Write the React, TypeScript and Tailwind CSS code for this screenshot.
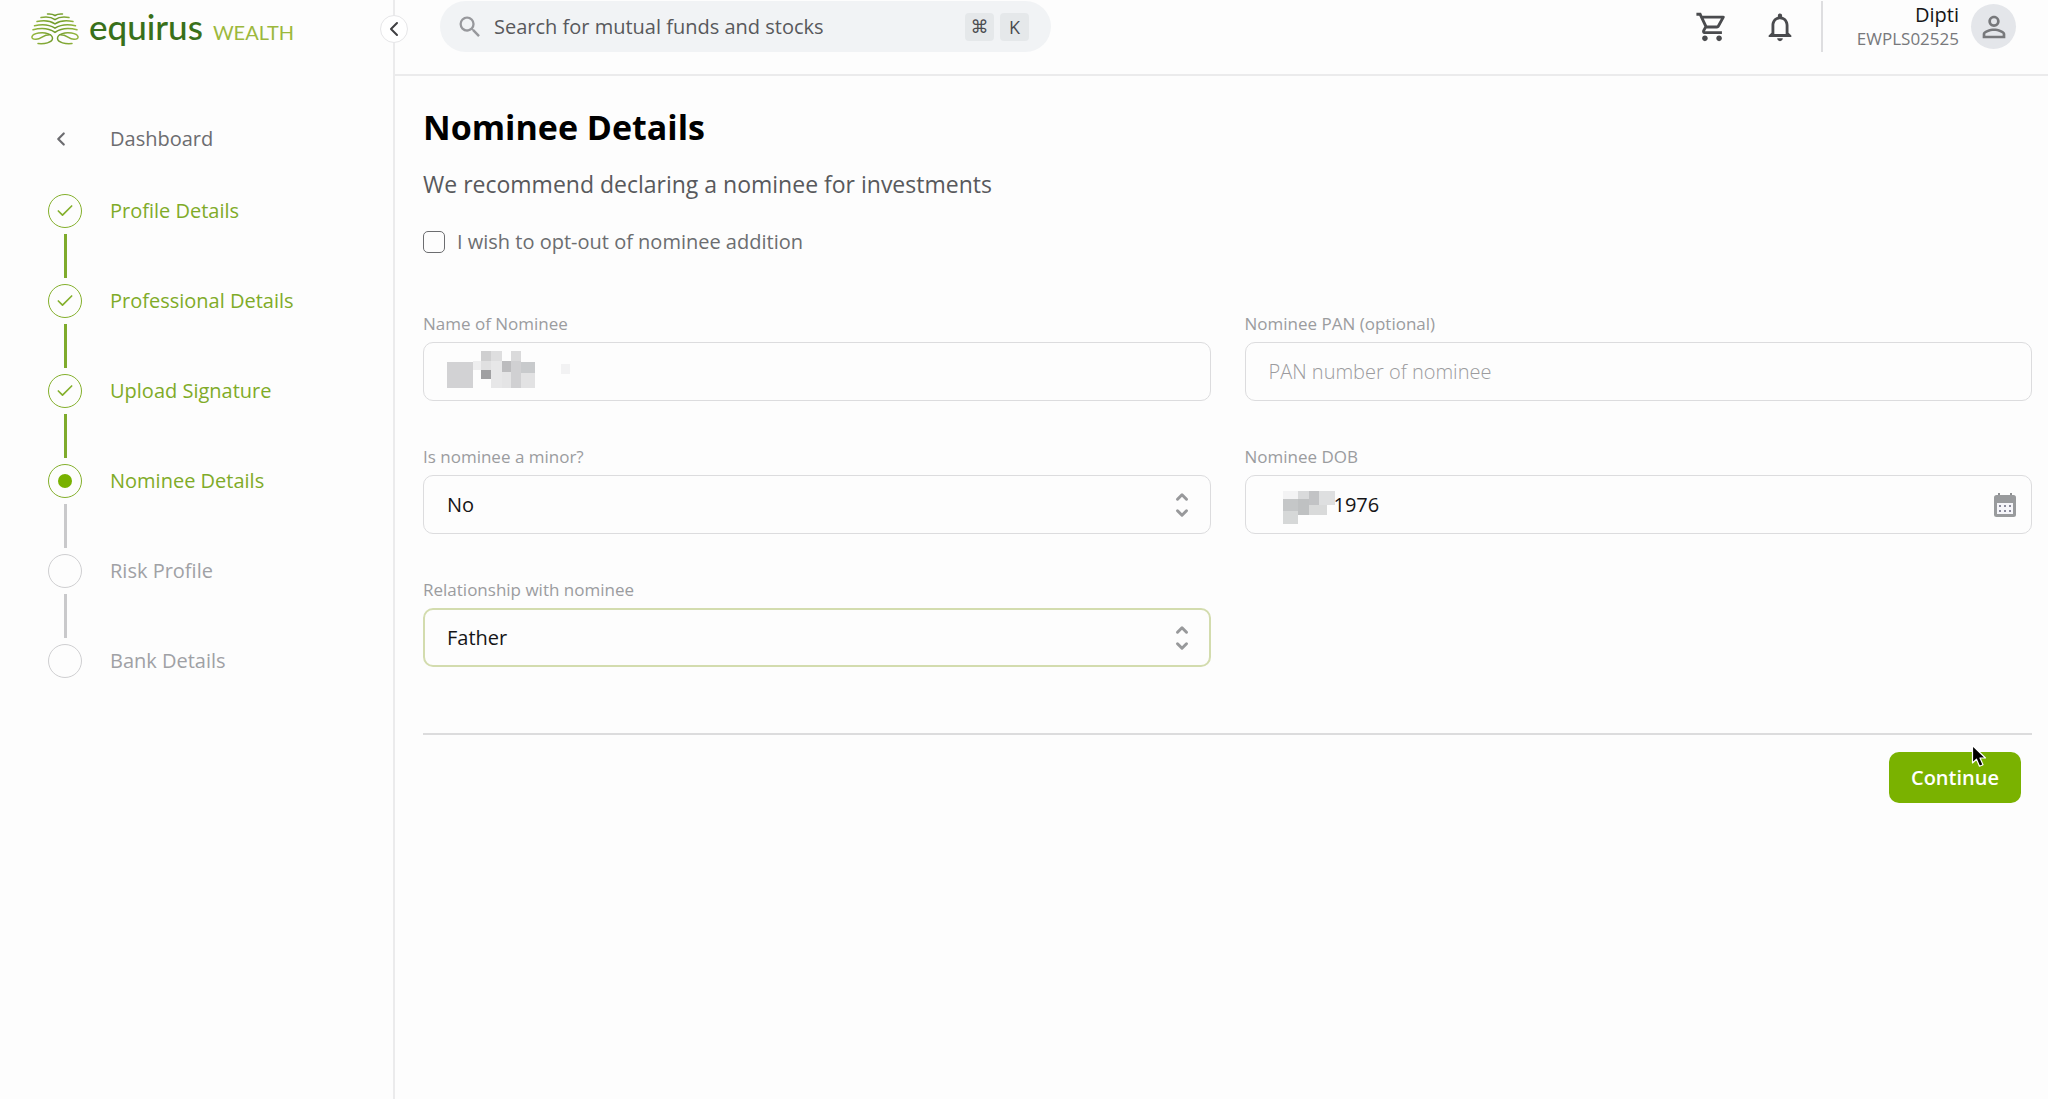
import { useState } from "react";
import type { ReactNode } from "react";
import { MdNotificationsNone, MdOutlineShoppingCart, MdPersonOutline, MdSearch } from "react-icons/md";
import { LuCheck, LuChevronDown, LuChevronLeft, LuChevronUp } from "react-icons/lu";

type StepState = "done" | "current" | "todo";

const STEPS: { label: string; state: StepState }[] = [
  { label: "Profile Details", state: "done" },
  { label: "Professional Details", state: "done" },
  { label: "Upload Signature", state: "done" },
  { label: "Nominee Details", state: "current" },
  { label: "Risk Profile", state: "todo" },
  { label: "Bank Details", state: "todo" },
];

const inputClass =
  "h-[59px] w-full rounded-[10px] border border-[#dcdcde] bg-transparent px-[23px] text-xl text-[#151517] outline-none placeholder:font-light placeholder:text-[#9b9b9e]";

function Logo() {
  return (
    <a href="#" className="flex h-[34px] items-center pl-[31px]" aria-label="Equirus Wealth">
      <svg viewBox="0 0 48 32" className="h-8 w-12" fill="none" strokeWidth="1.5" strokeLinecap="round">
        <defs>
          <linearGradient id="leaf" gradientUnits="userSpaceOnUse" x1="0" y1="0" x2="48" y2="0">
            <stop offset="0" stopColor="#98b840" />
            <stop offset="0.5" stopColor="#6f9a2a" />
            <stop offset="1" stopColor="#98b840" />
          </linearGradient>
        </defs>
        <g stroke="url(#leaf)">
          <path d="M16.500 1c3-.3 5.500.2 7.500 1.500c2-1.300 4.500-1.800 7.500-1.500" />
          <path d="M10 4.600c5-.9 10-.7 14 2c4-2.700 9-2.900 14-2" />
          <path d="M6 8.600c6-1.300 13-.9 18 2.200c5-3.100 12-3.500 18-2.200" />
          <path d="M3.500 12.800c7-1.700 15-1.100 20.500 2.400c5.500-3.500 13.500-4.100 20.500-2.400" />
          <path d="M2 16.800c7-1.900 16-1.600 22 2.600c6-4.200 15-4.500 22-2.600" />
          <path d="M7 30.500c6 .6 14.500-.6 14.500-5.200c0-4.600-8-6.200-14-5.200c-8 1.400-8.500 6.400-2.500 6.100c6-.3 7-5 14.500-4.400" />
          <path d="M41 30.500c-6 .6-14.500-.6-14.500-5.200c0-4.600 8-6.200 14-5.200c8 1.400 8.500 6.400 2.500 6.100c-6-.3-7-5-14.500-4.400" />
        </g>
      </svg>
      <span className="ml-2.5 flex items-baseline gap-2.5 pb-1 font-['Lato',sans-serif] leading-none">
        <span className="text-[35px] leading-[34px] font-medium text-[#39701a]">equirus</span>
        <span className="text-xl text-[#9cb83c]">WEALTH</span>
      </span>
    </a>
  );
}

function StepMark({ state }: { state: StepState }) {
  if (state === "todo") {
    return <span className="h-[34px] w-[34px] rounded-full border border-[#cfcfd1]" />;
  }
  return (
    <span className="flex h-[34px] w-[34px] items-center justify-center rounded-full border border-[#84b02c] text-[#84b02c]">
      {state === "done" ? (
        <LuCheck className="h-5 w-5" strokeWidth={2} />
      ) : (
        <span className="h-3.5 w-3.5 rounded-full bg-[#78b100]" />
      )}
    </span>
  );
}

function Sidebar() {
  return (
    <aside className="relative w-[395px] shrink-0 border-r-2 border-[#ebebec] pt-3">
      <Logo />
      <button
        type="button"
        aria-label="Collapse menu"
        className="absolute top-[15px] -right-[15px] flex h-7 w-7 items-center justify-center rounded-full border border-[#e6e6e8] bg-white text-[#3f3f42]"
      >
        <LuChevronLeft className="h-6 w-6" />
      </button>

      <nav className="mt-19 pl-12 text-xl">
        <a href="#" className="flex h-[34px] items-center gap-7 text-[#6c6c70]">
          <span className="flex w-[34px] justify-start pl-0.5">
            <LuChevronLeft className="h-[22px] w-[22px]" strokeWidth={2.4} />
          </span>
          Dashboard
        </a>
        <ol className="mt-[38px]">
          {STEPS.map((step, i) => (
            <li key={step.label} className="flex gap-7">
              <div className="flex flex-col items-center">
                <StepMark state={step.state} />
                {i < STEPS.length - 1 && (
                  <span
                    className={`my-1.5 h-11 w-[3px] ${step.state === "done" ? "bg-[#7fab2c]" : "bg-[#c9c9cb]"}`}
                  />
                )}
              </div>
              <a
                href="#"
                className={`h-[34px] leading-[34px] ${step.state === "todo" ? "text-[#a0a1a5]" : "text-[#80ab28]"}`}
              >
                {step.label}
              </a>
            </li>
          ))}
        </ol>
      </nav>
    </aside>
  );
}

function Header() {
  return (
    <header className="flex h-[76px] items-start justify-between border-b-2 border-[#ebebec] pt-px pr-8 pl-[45px]">
      <label className="flex h-[51px] w-[611px] items-center rounded-full bg-[#f1f3f5] pr-[22px] pl-4">
        <MdSearch className="h-7 w-7 text-[#97989c]" />
        <input
          type="text"
          aria-label="Search"
          placeholder="Search for mutual funds and stocks"
          className="ml-2.5 min-w-0 flex-1 bg-transparent text-xl outline-none placeholder:text-[#58595c]"
        />
        <span className="flex gap-1.5 text-lg text-[#4b4c4f]">
          <kbd className="flex h-7 w-[29px] items-center justify-center rounded bg-[#e5e8ea] font-['DejaVu_Sans',sans-serif]">
            ⌘
          </kbd>
          <kbd className="flex h-7 w-[29px] items-center justify-center rounded bg-[#e5e8ea] font-['Open_Sans',sans-serif]">
            K
          </kbd>
        </span>
      </label>

      <div className="flex h-[51px] items-center">
        <button type="button" aria-label="Cart" className="text-[#4a4b4e]">
          <MdOutlineShoppingCart className="h-[34px] w-[34px]" />
        </button>
        <button type="button" aria-label="Notifications" className="ml-[34px] text-[#4a4b4e]">
          <MdNotificationsNone className="h-[34px] w-[34px]" />
        </button>
        <span className="ml-6 h-[51px] w-0.5 bg-[#dedee0]" />
        <div className="ml-[34px] text-right">
          <p className="text-xl leading-6 text-[#151517]">Dipti</p>
          <p className="text-[17px] leading-6 text-[#77787b]">EWPLS02525</p>
        </div>
        <button
          type="button"
          aria-label="Account"
          className="ml-3 flex h-[45px] w-[45px] items-center justify-center rounded-full bg-[#e4e6ea] text-[#77787b]"
        >
          <MdPersonOutline className="h-[34px] w-[34px]" />
        </button>
      </div>
    </header>
  );
}

function Field({ id, label, children }: { id: string; label: string; children: ReactNode }) {
  return (
    <div className="flex flex-col gap-1.5">
      <label htmlFor={id} className="text-[17px] leading-6 text-[#9b9c9f]">
        {label}
      </label>
      <div className="relative">{children}</div>
    </div>
  );
}

interface SelectFieldProps {
  id: string;
  label: string;
  options: string[];
  active?: boolean;
}

function SelectField({ id, label, options, active }: SelectFieldProps) {
  return (
    <Field id={id} label={label}>
      <select
        id={id}
        className={`${inputClass} appearance-none ${active ? "border-2! border-[#d3dcae]! px-[22px]!" : ""}`}
        defaultValue={options[0]}
      >
        {options.map((o) => (
          <option key={o}>{o}</option>
        ))}
      </select>
      <span className="pointer-events-none absolute inset-y-0 right-5 flex flex-col items-center justify-center text-[#98999b]">
        <LuChevronUp className="-mb-0.5 h-[18px] w-[18px]" strokeWidth={4} />
        <LuChevronDown className="h-[18px] w-[18px]" strokeWidth={4} />
      </span>
    </Field>
  );
}

// Mosaic that hides the nominee's name
function NameMask() {
  return (
    <svg viewBox="0 0 124 37" className="pointer-events-none absolute top-[9px] left-6 h-[37px] w-[124px]" shapeRendering="crispEdges">
      <rect x="0" y="11" width="26" height="26" fill="#d2d2d4" />
      <rect x="26" y="10" width="9" height="9" fill="#eeeeef" />
      <rect x="34" y="0" width="10" height="10" fill="#cfcfd0" />
      <rect x="34" y="10" width="10" height="9" fill="#e0e0e1" />
      <rect x="34" y="19" width="10" height="9" fill="#a0a0a2" />
      <rect x="44" y="0" width="11" height="10" fill="#dededf" />
      <rect x="44" y="10" width="11" height="27" fill="#e7e7e8" />
      <rect x="55" y="10" width="9" height="11" fill="#bcbcbe" />
      <rect x="55" y="21" width="9" height="16" fill="#e4e4e5" />
      <rect x="64" y="0" width="10" height="10" fill="#dadadb" />
      <rect x="64" y="10" width="10" height="27" fill="#d0d0d2" />
      <rect x="74" y="11" width="14" height="11" fill="#c8cacc" />
      <rect x="74" y="22" width="14" height="15" fill="#e2e2e3" />
      <rect x="114" y="13" width="9" height="10" fill="#f2f2f3" />
    </svg>
  );
}

// Mosaic over the day and month of the birth date
function DateMask() {
  return (
    <svg viewBox="0 0 52 33" className="pointer-events-none absolute top-4 left-[38px] h-[33px] w-[52px]" shapeRendering="crispEdges">
      <rect x="0" y="0" width="15" height="8" fill="#f3f3f4" />
      <rect x="0" y="8" width="15" height="12" fill="#c5c7c8" />
      <rect x="0" y="20" width="15" height="13" fill="#d6d8d8" />
      <rect x="15" y="0" width="11" height="8" fill="#d9dadb" />
      <rect x="15" y="8" width="11" height="16" fill="#bfc1c2" />
      <rect x="26" y="0" width="10" height="14" fill="#c2c3c5" />
      <rect x="26" y="14" width="18" height="10" fill="#d9dada" />
      <rect x="36" y="0" width="16" height="14" fill="#dedfe0" />
    </svg>
  );
}

function CalendarIcon() {
  return (
    <svg viewBox="0 0 22 24" className="h-6 w-[22px]">
      <path d="M4 0h2v3H4zM16 0h2v3h-2z" fill="#8f9193" />
      <rect x="0" y="2" width="22" height="22" rx="2.500" fill="#999b9d" />
      <path d="M3 10h16v11H3z" fill="#f6f6fa" />
      <path
        d="M5 12h2v2H5zM10 12h2v2h-2zM15 12h2v2h-2zM5 17h2v2H5zM10 17h2v2h-2zM15 17h2v2h-2z"
        fill="#8b8b9c"
      />
    </svg>
  );
}

function Pointer() {
  return (
    <svg viewBox="0 0 16 24" className="pointer-events-none absolute -top-2 left-[82px] h-6 w-4">
      <path
        d="M1.500 1.500v17.500l4-3.800 3 7 3.500-1.500-3-6.700h5.500z"
        fill="#000"
        stroke="#fff"
        strokeWidth="1.200"
        strokeLinejoin="round"
      />
    </svg>
  );
}

export default function App() {
  const [optOut, setOptOut] = useState(false);

  return (
    <div className="flex min-h-screen bg-[#fdfdfd] font-['Open_Sans',sans-serif]">
      <Sidebar />
      <div className="min-w-0 flex-1">
        <Header />
        <main className="pt-7 pr-4 pl-7">
          <h1 className="text-[34px] leading-[46px] font-bold text-black">Nominee Details</h1>
          <p className="mt-[18px] text-[23px] leading-8 text-[#58595c]">
            We recommend declaring a nominee for investments
          </p>

          <label className="mt-[30px] flex h-6 w-fit items-center gap-3 text-xl text-[#6c6d70]">
            <input
              type="checkbox"
              checked={optOut}
              onChange={(e) => setOptOut(e.target.checked)}
              className="h-[22px] w-[22px] appearance-none rounded-[5px] border border-[#6c6d70] checked:bg-[#78b100]"
            />
            I wish to opt-out of nominee addition
          </label>

          <form onSubmit={(e) => e.preventDefault()}>
            <div className="mt-[58px] grid grid-cols-2 gap-x-[34px] gap-y-11">
              <Field id="name" label="Name of Nominee">
                <input id="name" type="text" className={inputClass} />
                <NameMask />
              </Field>
              <Field id="pan" label="Nominee PAN (optional)">
                <input id="pan" type="text" placeholder="PAN number of nominee" className={inputClass} />
              </Field>
              <SelectField id="minor" label="Is nominee a minor?" options={["No", "Yes"]} />
              <Field id="dob" label="Nominee DOB">
                <input id="dob" type="text" defaultValue="1976" className={`${inputClass} pl-[88px]!`} />
                <DateMask />
                <button type="button" aria-label="Open calendar" className="absolute inset-y-0 right-4">
                  <CalendarIcon />
                </button>
              </Field>
              <SelectField id="relation" label="Relationship with nominee" options={["Father", "Mother", "Spouse"]} active />
            </div>

            <div className="mt-[66px] flex justify-end border-t-2 border-[#dcdcdd] pt-[17px] pr-[11px]">
              <div className="relative">
                <button
                  type="submit"
                  className="h-[51px] w-[132px] rounded-[10px] bg-[#7ab200] text-xl font-semibold text-white"
                >
                  Continue
                </button>
                <Pointer />
              </div>
            </div>
          </form>
        </main>
      </div>
    </div>
  );
}
